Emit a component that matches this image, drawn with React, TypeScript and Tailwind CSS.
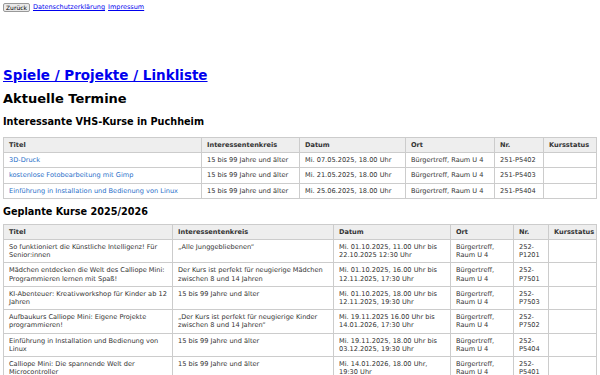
const vhs = [
  { t: "3D-Druck", k: "15 bis 99 Jahre und älter", d: "Mi. 07.05.2025, 18.00 Uhr", o: "Bürgertreff, Raum U 4", n: "251-P5402" },
  { t: "kostenlose Fotobearbeitung mit Gimp", k: "15 bis 99 Jahre und älter", d: "Mi. 21.05.2025, 18.00 Uhr", o: "Bürgertreff, Raum U 4", n: "251-P5403" },
  { t: "Einführung in Installation und Bedienung von Linux", k: "15 bis 99 Jahre und älter", d: "Mi. 25.06.2025, 18.00 Uhr", o: "Bürgertreff, Raum U 4", n: "251-P5404" },
];

const geplant = [
  { t: "So funktioniert die Künstliche Intelligenz! Für Senior:innen", k: "„Alle Junggebliebenen“", d: "Mi. 01.10.2025, 11.00 Uhr bis 22.10.2025 12:30 Uhr", n: "252-P1201" },
  { t: "Mädchen entdecken die Welt des Calliope Mini: Programmieren lernen mit Spaß!", k: "Der Kurs ist perfekt für neugierige Mädchen zwischen 8 und 14 Jahren", d: "Mi. 01.10.2025, 16.00 Uhr bis 12.11.2025, 17:30 Uhr", n: "252-P7501" },
  { t: "KI-Abenteuer: Kreativworkshop für Kinder ab 12 Jahren", k: "15 bis 99 Jahre und älter", d: "Mi. 01.10.2025, 18.00 Uhr bis 12.11.2025, 19:30 Uhr", n: "252-P7503" },
  { t: "Aufbaukurs Calliope Mini: Eigene Projekte programmieren!", k: "„Der Kurs ist perfekt für neugierige Kinder zwischen 8 und 14 Jahren“", d: "Mi. 19.11.2025 16.00 Uhr bis 14.01.2026, 17:30 Uhr", n: "252-P7502" },
  { t: "Einführung in Installation und Bedienung von Linux", k: "15 bis 99 Jahre und älter", d: "Mi. 19.11.2025, 18.00 Uhr bis 03.12.2025, 19:30 Uhr", n: "252-P5404" },
  { t: "Calliope Mini: Die spannende Welt der Microcontroller", k: "15 bis 99 Jahre und älter", d: "Mi. 14.01.2026, 18.00 Uhr, 19:30 Uhr", n: "252-P5401" },
];

const th = "border border-[#ccc] bg-[#eee] px-[5px] py-[3px] text-left font-bold";
const td = "border border-[#ccc] px-[5px] py-[3px] align-top";

export default function App() {
  return (
    <div className="h-[375px] overflow-hidden bg-white px-[3px] pt-[3px] text-black [font-family:'DejaVu_Sans',sans-serif]">
      <div className="flex items-center gap-[3px] text-[6.5px] leading-[9px]">
        <button className="rounded-[2px] border border-[#999] bg-[#e9e9e9] px-[2px] text-[6px] leading-[7px] text-black">
          Zurück
        </button>
        <a href="#" className="text-[#0000ee] underline">Datenschutzerklärung</a>
        <a href="#" className="text-[#0000ee] underline">Impressum</a>
      </div>

      <h1 className="mt-[55px] text-[13.5px] font-bold leading-[16px]">
        <a href="#" className="text-[#0000ee] underline">Spiele / Projekte / Linkliste</a>
      </h1>
      <h2 className="mt-[8px] text-[13px] font-bold leading-[16px]">Aktuelle Termine</h2>
      <h3 className="mt-[9px] text-[9.7px] font-bold leading-[12px]">Interessante VHS-Kurse in Puchheim</h3>

      <table className="mt-[9px] w-full table-fixed border-collapse text-[6.6px] leading-[8.2px] text-[#333]">
        <colgroup>
          <col className="w-[198px]" />
          <col className="w-[98px]" />
          <col className="w-[106px]" />
          <col className="w-[89px]" />
          <col className="w-[49px]" />
          <col />
        </colgroup>
        <thead>
          <tr>
            <th className={th}>Titel</th>
            <th className={th}>Interessentenkreis</th>
            <th className={th}>Datum</th>
            <th className={th}>Ort</th>
            <th className={th}>Nr.</th>
            <th className={th}>Kursstatus</th>
          </tr>
        </thead>
        <tbody>
          {vhs.map((r) => (
            <tr key={r.n}>
              <td className={td}>
                <a href="#" className="text-[#2a6fc9]">{r.t}</a>
              </td>
              <td className={td}>{r.k}</td>
              <td className={td}>{r.d}</td>
              <td className={td}>{r.o}</td>
              <td className={td}>{r.n}</td>
              <td className={td}></td>
            </tr>
          ))}
        </tbody>
      </table>

      <h3 className="mt-[7px] text-[9.7px] font-bold leading-[12px]">Geplante Kurse 2025/2026</h3>

      <table className="mt-[6px] w-full table-fixed border-collapse text-[6.6px] leading-[8.2px] text-[#333]">
        <colgroup>
          <col className="w-[169px]" />
          <col className="w-[161px]" />
          <col className="w-[117px]" />
          <col className="w-[63px]" />
          <col className="w-[35px]" />
          <col />
        </colgroup>
        <thead>
          <tr>
            <th className={th}>Titel</th>
            <th className={th}>Interessentenkreis</th>
            <th className={th}>Datum</th>
            <th className={th}>Ort</th>
            <th className={th}>Nr.</th>
            <th className={th}>Kursstatus</th>
          </tr>
        </thead>
        <tbody>
          {geplant.map((r) => (
            <tr key={r.n + r.t}>
              <td className={td}>{r.t}</td>
              <td className={td}>{r.k}</td>
              <td className={td}>{r.d}</td>
              <td className={td}>Bürgertreff, Raum U 4</td>
              <td className={td}>{r.n}</td>
              <td className={td}></td>
            </tr>
          ))}
        </tbody>
      </table>
    </div>
  );
}
